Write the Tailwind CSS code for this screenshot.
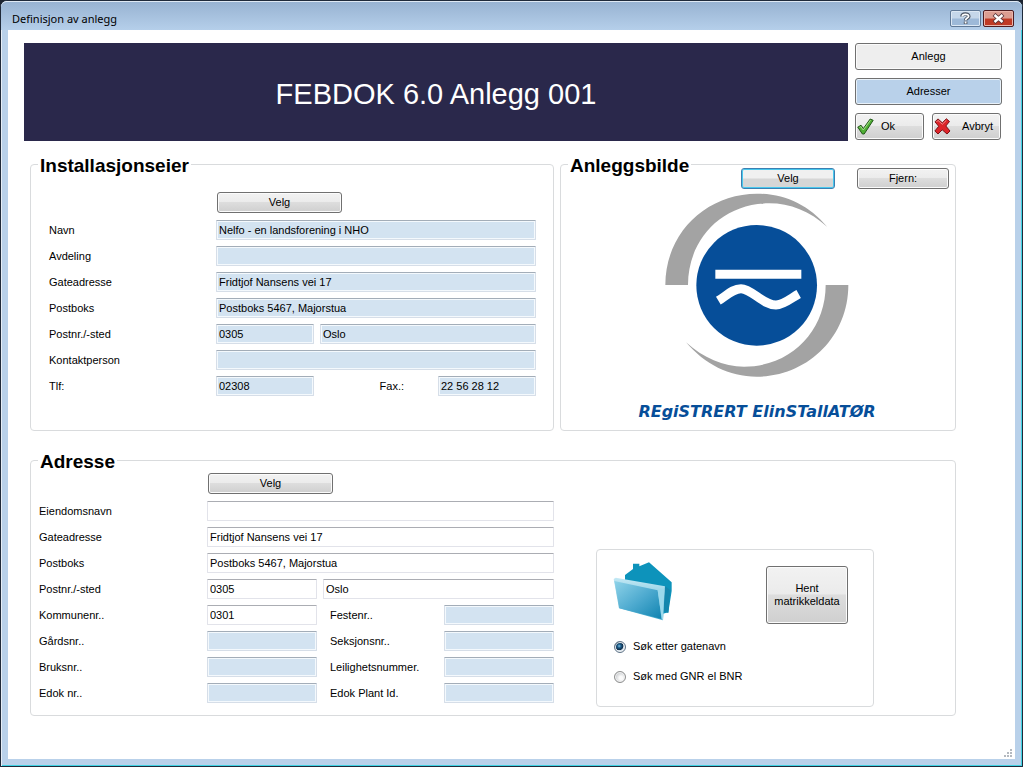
<!DOCTYPE html>
<html lang="no">
<head>
<meta charset="utf-8">
<title>Definisjon av anlegg</title>
<script src="https://cdn.jsdelivr.net/npm/@tailwindcss/browser@4"></script>
<style>
  .ui { font-family: "Liberation Sans", Arial, sans-serif; }
  .btn { border: 1px solid #707070; border-radius: 3px; color: #000; box-shadow: inset 0 0 0 1px #fbfbfb; background: linear-gradient(#f2f2f2, #ebebeb 48%, #dddddd 50%, #cfcfcf); }
  .field { border: 1px solid #e2e3ea; border-top-color: #abadb3; border-radius: 1px; height: 20px; width: 100%; min-width: 0; padding: 0 2px; color: #000; background: #fff; }
  .locked { background: #d3e3f1; border-color: #d6dee8; border-top-color: #a3adb8; box-shadow: inset 0 0 0 1px #f4f9fd; }
  .radio { appearance: none; width: 12px; height: 12px; border-radius: 50%; border: 1px solid #8e8f8f; background: radial-gradient(circle at 60% 60%, #fafafa 20%, #c4c7ca 75%); box-shadow: inset 0 0 0 1px #f4f4f4; }
  .radio:checked { border-color: #5d7286; background: radial-gradient(circle at 42% 40%, #7fc4e6 0, #1c5a86 22%, #0d2c48 46%, #cfdde8 54%, #e8eef3 75%); }
</style>
</head>
<body class="ui min-h-screen bg-[#1c2430] text-[11px] leading-[13px] text-black">
<div class="flex min-h-screen flex-col rounded-t-[7px] border border-[#1f2a3a] bg-[#b9d1ea] shadow-[inset_1px_1px_0_#e6eef7,inset_-1px_-1px_0_#3fd3e4]">
  <header class="flex h-[29px] items-start justify-between rounded-t-[6px] border-t border-[#dfe9f4] bg-linear-to-b from-[#98b3d2] to-[#b5cfea] pr-2 pl-[11px]">
    <h1 class="pt-[8px] font-['Noto_Sans',sans-serif] text-[11px] leading-[18px]">Definisjon av anlegg</h1>
    <div class="flex gap-[2px] pt-[8px]">
      <button type="button" aria-label="Hjelp" class="flex h-[17px] w-[31px] items-center justify-center rounded-[2px] border border-[#5f7896] bg-linear-to-b from-[#c5d7ea] from-45% to-[#9db9d8] to-55% shadow-[inset_0_0_0_1px_#dce8f4]">
        <svg width="11" height="13" viewBox="0 0 11 13" fill="none"><path d="M2 4.6C2 1.2 8.8 1.2 8.8 4.4C8.8 6.4 5.6 6 5.6 8.4M5.6 9.4V12" stroke="#4c5563" stroke-width="3.6"/><path d="M2.3 4.4C2.3 1.6 8.6 1.6 8.6 4.3C8.6 6.2 5.6 6 5.6 8.3M5.6 9.6V11.6" stroke="#fff" stroke-width="1.8"/></svg>
      </button>
      <button type="button" aria-label="Lukk" class="flex h-[17px] w-[31px] items-center justify-center rounded-[2px] border border-[#4e1c20] bg-linear-to-b from-[#dc9d91] from-45% to-[#bf3a25] to-55% shadow-[inset_0_0_0_1px_#eab5ab]">
        <svg width="13" height="11" viewBox="0 0 13 11" fill="none"><path d="M2 1.5L11 9.5M11 1.5L2 9.5" stroke="#5a3338" stroke-width="4.2"/><path d="M2.5 2L10.5 9M10.5 2L2.5 9" stroke="#fff" stroke-width="2.4"/></svg>
      </button>
    </div>
  </header>

  <main class="relative mx-[7px] mb-[7px] flex flex-1 flex-col bg-white">
    <div class="flex gap-[7px] pt-[13px] pr-[13px] pl-4">
      <div class="flex h-[98px] flex-1 items-center justify-center bg-[#2a284b] pt-1 text-[29px] leading-8 text-white">FEBDOK 6.0 Anlegg 001</div>
      <nav class="flex w-[147px] flex-col gap-2">
        <button type="button" class="h-[27px] rounded-[3px] border border-[#707070] bg-[#eeeeee] shadow-[inset_0_0_0_1px_#fbfbfb]">Anlegg</button>
        <button type="button" class="h-[27px] rounded-[3px] border border-[#707070] bg-[#b9d1ea] shadow-[inset_0_0_0_1px_#e9f2fa]">Adresser</button>
        <div class="grid grid-cols-[69px_69px] gap-2">
          <button type="button" class="btn flex h-[27px] items-center gap-[7px] pl-[1px]">
            <svg width="17" height="17" viewBox="0 0 17 17"><path d="M.8 9.2L4 7.2L6.3 10.6L13.2 1L16.2 2.3L7.2 16H5.4Z" fill="#4fae35" stroke="#23571a" stroke-linejoin="round"/><path d="M2.5 9.4L3.8 8.6L6.3 12L13.5 2.2" fill="none" stroke="#a5df8a"/></svg>Ok</button>
          <button type="button" class="btn flex h-[27px] items-center justify-between pr-[7px] pl-[1px]">
            <svg width="17" height="17" viewBox="0 0 17 17"><path d="M1 3.8L4 .9L8.3 4.8L12.4 .8L15.5 3.5L11.8 8L16 13L13 16L8.2 11.8L4 16L.9 13L4.7 8.3Z" fill="#dd2429" stroke="#7a1217" stroke-linejoin="round"/><path d="M2.5 4L4 2.4L8.3 6.3L12.4 2.3" fill="none" stroke="#f08a8a"/></svg>Avbryt</button>
        </div>
      </nav>
    </div>

    <div class="mt-[9px] mr-[59px] mb-[43px] ml-[22px] grid grid-cols-[524fr_396fr] gap-x-[6px] gap-y-[15px]">
      <fieldset class="min-w-0 rounded-[4px] border border-[#d9dbdd] pr-[17px] pb-[34px] pl-[18px]">
        <legend class="-ml-[11px] px-[2px] pt-1 text-[19px] leading-6 font-bold">Installasjonseier</legend>
        <button type="button" class="btn mt-[14px] ml-[168px] block h-[21px] w-[125px]">Velg</button>
        <div class="mt-[7px] grid grid-cols-[167px_98px_1fr_98px] items-center gap-y-[6px]">
          <label for="navn">Navn</label><div class="col-span-3"><input id="navn" class="field locked" value="Nelfo - en landsforening i NHO" readonly></div>
          <label for="avd">Avdeling</label><div class="col-span-3"><input id="avd" class="field locked" readonly></div>
          <label for="gate">Gateadresse</label><div class="col-span-3"><input id="gate" class="field locked" value="Fridtjof Nansens vei 17" readonly></div>
          <label for="boks">Postboks</label><div class="col-span-3"><input id="boks" class="field locked" value="Postboks 5467, Majorstua" readonly></div>
          <label for="pnr">Postnr./-sted</label><input id="pnr" class="field locked" value="0305" readonly><div class="col-span-2 pl-[6px]"><input aria-label="Poststed" class="field locked" value="Oslo" readonly></div>
          <label for="kont">Kontaktperson</label><div class="col-span-3"><input id="kont" class="field locked" readonly></div>
          <label for="tlf">Tlf:</label><input id="tlf" class="field locked" value="02308" readonly><label for="fax" class="pr-[34px] text-right">Fax.:</label><input id="fax" class="field locked" value="22 56 28 12" readonly>
        </div>
      </fieldset>

      <fieldset class="min-w-0 rounded-[4px] border border-[#d9dbdd] px-[6px]">
        <legend class="ml-[1px] px-[2px] pt-1 text-[19px] leading-6 font-bold">Anleggsbilde</legend>
        <div class="-mt-[10px] flex justify-end gap-[22px]">
          <button type="button" class="h-[21px] w-[94px] rounded-[3px] border border-[#3c7fb1] bg-linear-to-b from-[#f0f0f0] from-48% to-[#d6d6d6] to-52% shadow-[inset_0_0_0_1px_#48c8ee]">Velg</button>
          <button type="button" class="btn h-[21px] w-[92px]">Fjern:</button>
        </div>
        <div class="flex flex-col items-center pt-1 pr-[2px]">
          <svg width="184" height="184" viewBox="0 0 552 552" role="img" aria-label="Registrert elinstallatør">
            <path d="M1 276C1 118 126 2 276 2C360 2 430 35 487 102C435 55 375 31 313 31C170 31 69 140 69 276Z" fill="#a3a3a3"/>
            <path d="M550 276C550 434 425 551 275 551C191 551 120 514 63 448C115 495 175 521 237 521C380 521 482 412 482 276Z" fill="#a3a3a3"/>
            <circle cx="275" cy="277" r="181" fill="#064e99"/>
            <path d="M151 230H409V257H151Z" fill="#fff"/>
            <path d="M160 323C183 309 203 287 228 287C260 287 293 336 333 336C356 336 378 316 401 303" fill="none" stroke="#fff" stroke-width="27"/>
          </svg>
          <p class="mt-[23px] font-['DejaVu_Sans',sans-serif] text-[16px] leading-6 font-bold whitespace-nowrap text-[#064e99] italic">REgiSTRERT ElinSTallATØR</p>
        </div>
      </fieldset>

      <fieldset class="col-span-2 flex min-w-0 items-start rounded-[4px] border border-[#d9dbdd] pr-[81px] pb-[7px] pl-[8px]">
        <legend class="-ml-[1px] px-[2px] pt-1 text-[19px] leading-6 font-bold">Adresse</legend>
        <div class="-mt-[1px] flex-1 pb-[5px]">
          <button type="button" class="btn ml-[169px] block h-[21px] w-[125px]">Velg</button>
          <div class="mt-[7px] grid grid-cols-[168px_110px_1fr_110px] items-center gap-y-[6px]">
            <label for="eien">Eiendomsnavn</label><div class="col-span-3"><input id="eien" class="field"></div>
            <label for="gate2">Gateadresse</label><div class="col-span-3"><input id="gate2" class="field" value="Fridtjof Nansens vei 17"></div>
            <label for="boks2">Postboks</label><div class="col-span-3"><input id="boks2" class="field" value="Postboks 5467, Majorstua"></div>
            <label for="pnr2">Postnr./-sted</label><input id="pnr2" class="field" value="0305"><div class="col-span-2 pl-[6px]"><input aria-label="Poststed" class="field" value="Oslo"></div>
            <label for="komm">Kommunenr..</label><input id="komm" class="field" value="0301"><label for="feste" class="pl-[13px]">Festenr..</label><input id="feste" class="field locked" readonly>
            <label for="gard">Gårdsnr..</label><input id="gard" class="field locked" readonly><label for="seks" class="pl-[13px]">Seksjonsnr..</label><input id="seks" class="field locked" readonly>
            <label for="bruk">Bruksnr..</label><input id="bruk" class="field locked" readonly><label for="leil" class="pl-[13px]">Leilighetsnummer.</label><input id="leil" class="field locked" readonly>
            <label for="edok">Edok nr..</label><input id="edok" class="field locked" readonly><label for="plant" class="pl-[13px]">Edok Plant Id.</label><input id="plant" class="field locked" readonly>
          </div>
        </div>
        <div class="mt-[75px] ml-[42px] h-[158px] w-[278px] rounded-[4px] border border-[#d9dbdd] pr-[25px] pl-4">
          <div class="flex items-start justify-between pt-[11px]">
            <svg width="60" height="60" viewBox="0 0 180 180">
              <defs>
                <linearGradient id="front" x1="0" y1="0" x2="1" y2="1"><stop offset="0" stop-color="#8fd3e9"/><stop offset=".5" stop-color="#4fabd0"/><stop offset="1" stop-color="#0f83b0"/></linearGradient>
                <linearGradient id="edge" x1="0" y1="0" x2="0" y2="1"><stop offset="0" stop-color="#c4e9f5"/><stop offset="1" stop-color="#3da7ca"/></linearGradient>
              </defs>
              <path d="M36 58V42L60 24V8H79V16L108 4L176 64V90L166 154L150 158L36 70Z" fill="#0d93bb"/>
              <path d="M2 56L160 78L172 88L166 156L150 150Z" fill="#1486ad"/>
              <path d="M2 54L8 50L156 76L150 178L18 142Z" fill="url(#edge)"/>
              <path d="M4 60L134 88L146 174L20 142Z" fill="url(#front)"/>
              <path d="M134 88L154 84L150 178L146 174Z" fill="#9bd9ec"/>
            </svg>
            <button type="button" class="btn mt-[5px] h-[58px] w-[82px]">Hent<br>matrikkeldata</button>
          </div>
          <label class="mt-[16px] flex items-center gap-[7px] pl-[1px]"><input type="radio" name="sok" class="radio" checked>Søk etter gatenavn</label>
          <label class="mt-[17px] flex items-center gap-[7px] pl-[1px]"><input type="radio" name="sok" class="radio">Søk med GNR el BNR</label>
        </div>
      </fieldset>
    </div>
    <svg class="absolute right-[2px] bottom-[2px]" width="9" height="8" viewBox="0 0 9 8" fill="#b4b9bf"><path d="M6 0h2v2h-2zM3 3h2v2h-2zM6 3h2v2h-2zM0 6h2v2h-2zM3 6h2v2h-2zM6 6h2v2h-2z"/></svg>
  </main>
</div>
</body>
</html>
